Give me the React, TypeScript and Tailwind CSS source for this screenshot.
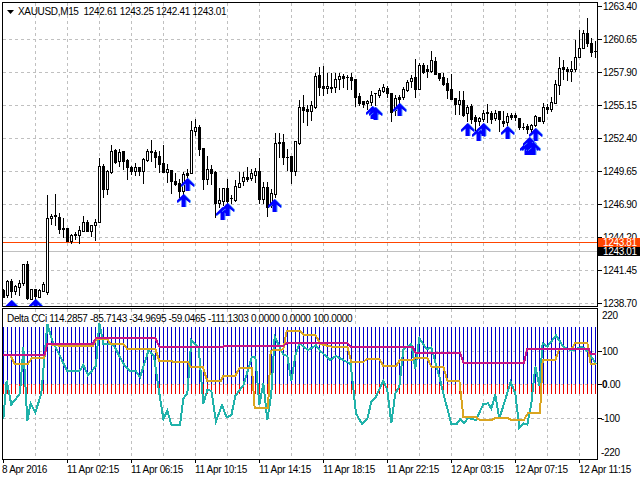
import React from "react";

type C = [string, number, number, number, number];
// type, high, body top, body bottom, low (page pixels); candle k sits at x = 3 + 4k
const candles: C[] = [
  ["b",289,290,297,297],["w",280,281,295,297],["b",279,281,291,297],["w",285,286,291,294],["w",280,283,287,295],
  ["w",264,264,283,285],["b",261,264,298,299],["w",289,289,299,299],["b",289,289,296,299],["w",289,290,297,297],
  ["w",282,284,291,291],["w",195,218,292,294],["w",214,216,218,224],["b",194,215,216,225],["b",213,217,229,233],
  ["b",218,228,229,237],["b",228,228,241,241],["w",234,235,241,243],["w",232,234,235,239],["w",226,230,235,243],
  ["w",216,222,231,231],["b",220,222,231,231],["w",225,225,231,236],["w",219,222,225,240],["w",158,166,222,222],
  ["b",164,166,189,197],["w",170,171,189,194],["w",145,151,172,173],["b",149,150,162,163],["w",149,152,161,166],
  ["b",151,151,161,169],["b",159,160,167,179],["b",166,167,171,174],["w",163,167,171,175],["b",167,167,171,175],
  ["w",158,159,171,183],["w",149,151,160,161],["b",140,151,152,161],["b",150,152,157,167],["b",151,156,164,172],
  ["b",145,163,172,172],["w",164,169,172,182],["b",170,170,181,193],["b",173,181,184,185],["b",179,183,191,197],
  ["w",172,174,191,196],["b",169,173,175,177],["w",121,130,173,173],["w",119,127,131,135],["b",125,127,149,155],
  ["b",148,148,179,189],["w",156,169,179,184],["b",165,169,173,184],["b",171,172,203,217],["w",188,200,203,207],
  ["w",188,188,201,205],["b",179,188,201,205],["b",195,198,198,203],["w",180,186,200,201],["w",172,183,187,187],
  ["w",172,177,181,185],["b",167,177,179,181],["w",169,173,178,180],["w",168,171,175,182],["b",158,171,199,203],
  ["w",182,187,199,203],["b",182,187,207,216],["w",189,193,205,207],["w",133,143,194,197],["b",133,142,143,157],
  ["b",134,142,157,164],["b",149,157,157,170],["b",156,156,171,183],["w",141,141,171,175],["w",100,107,143,144],
  ["b",95,107,110,122],["b",105,109,111,125],["w",101,105,111,120],["w",73,76,107,108],["b",67,75,87,95],
  ["b",66,86,88,95],["w",73,86,88,93],["b",73,87,88,92],["w",73,79,87,92],["w",73,76,79,89],
  ["b",74,76,78,87],["b",75,77,77,89],["b",73,77,80,89],["b",79,79,97,106],["b",93,96,103,105],
  ["b",101,101,104,107],["w",100,101,103,109],["w",91,95,102,105],["b",93,93,93,105],["w",88,90,95,97],
  ["w",84,87,91,92],["b",86,88,93,97],["b",93,93,112,121],["w",95,98,110,115],["b",95,97,99,103],
  ["w",87,89,97,99],["w",80,82,90,91],["w",75,78,81,87],["b",59,77,89,97],["w",63,65,89,89],
  ["b",63,65,72,73],["b",65,69,71,77],["w",51,60,71,72],["b",57,61,74,74],["b",73,73,78,80],
  ["b",73,77,84,85],["b",78,83,90,98],["b",74,89,99,99],["b",98,98,104,114],["w",91,100,104,114],
  ["b",91,100,115,116],["w",105,107,113,121],["b",104,106,119,123],["b",115,117,121,130],["w",117,118,121,125],
  ["w",110,113,119,121],["b",104,112,113,122],["b",111,113,119,123],["w",110,113,118,120],["b",111,111,119,131],
  ["b",111,121,123,126],["w",113,116,122,125],["b",113,115,117,119],["b",113,115,117,120],["b",118,118,127,129],
  ["b",123,127,127,129],["b",124,126,129,133],["w",124,125,129,132],["w",115,116,125,126],["b",117,117,121,121],
  ["w",103,107,121,123],["b",104,107,109,113],["w",97,102,109,111],["w",80,84,103,103],["w",57,68,85,94],
  ["b",60,67,69,79],["b",67,69,71,80],["w",61,69,71,81],["w",40,57,69,71],["w",30,48,57,57],
  ["w",30,33,48,48],["b",18,33,43,46],["b",38,43,52,56],["b",41,51,51,57],
];

const arrows: [number, number][] = [
  [11, 300],[35, 299],[183, 194],[187, 178],[222, 207],[227, 203],[274, 199],[372, 106],[375, 107],[399, 103],
  [467, 123],[478, 128],[483, 123],[507, 126],[535, 128],[526, 142],[528, 142],[529, 137],[531, 142],[533, 142],
];

const toPts = (off: number, a: number[]) => {
  const out: string[] = [];
  for (let i = 0; i < a.length; i += 2) out.push(`${off + a[i] / 3},${230 + a[i + 1] / 3}`);
  return out.join(" ");
};

const teal = toPts(0, [10,566,20,452,34,524,60,490,70,352,82,572,92,520,106,548,124,490,142,282,156,330,176,370,202,424,238,424,250,405,264,436,288,408,298,278,310,342,340,344,372,404,390,424,408,424,420,442,446,360,462,378,478,490,490,566,502,542,514,584,540,584,550,506,562,490,574,332,596,354,610,522,622,480,634,482,648,574,666,526,680,562,694,556,706,498,730,466,756,380,766,380,778,526,790,460,802,570,814,490,824,320,850,374,862,378,874,454,886,376,898,340,924,360,948,346,960,362])
  + " " + toPts(320, [0,362,30,390,48,378,92,402,108,550,126,582,142,566,154,516,166,504,190,452,202,480,214,580,226,490,238,470,250,358,274,342,286,416,298,324,320,358,334,352,358,440,370,490,394,582,410,582,420,568,432,580,444,564,468,570,490,522,504,520,514,536,526,494,538,566,572,456,586,490,598,594,610,580,622,584,634,520,646,410,658,468,668,340,682,350,708,316,730,350,754,362,786,350,806,366,828,403]);

const gold = toPts(0, [30,374,44,402,84,402,96,383,132,383,142,342,186,348,278,348,288,328,322,328,332,342,370,342,382,357,466,357,478,393,514,393,524,397,564,397,572,410,608,410,622,453,662,453,670,437,706,437,718,415,756,415,764,534,804,534,812,362,850,358,860,303,900,303,910,314,946,314,960,340])
  + " " + toPts(320, [0,342,34,350,82,350,94,396,130,396,142,386,178,386,190,408,228,408,240,390,276,390,286,384,322,384,334,410,370,410,382,452,418,452,430,560,466,560,478,569,516,569,528,563,562,563,572,569,612,569,624,549,660,549,668,390,706,390,718,356,756,356,766,338,802,338,812,403,828,403]);

const magenta = toPts(0, [8,374,134,374,142,342,278,342,288,324,466,324,478,350,670,350,672,348,850,348,862,338,960,338])
  + " " + toPts(320, [0,338,82,338,92,350,278,350,286,368,420,368,430,398,612,398,622,356,806,356,812,372,828,372]);

const vGrid = [35, 67, 99, 131, 163, 195, 227, 259, 291, 323, 355, 387, 419, 451, 483, 515, 547, 579];
const arrowPath = "M0 0 L6.5 6.5 L6.5 9 L2 5.5 L2 13 L-2 13 L-2 5.5 L-6.5 9 L-6.5 6.5 Z";

function VLines({ y1, y2 }: { y1: number; y2: number }) {
  return (
    <>
      {vGrid.map((x) => (
        <line key={x} x1={x + 0.5} x2={x + 0.5} y1={y1} y2={y2} stroke="#c0c0c0" strokeDasharray="3 3" />
      ))}
    </>
  );
}
function HLines({ ys }: { ys: number[] }) {
  return (
    <>
      {ys.map((y) => (
        <line key={y} x1={3} x2={597} y1={y + 0.5} y2={y + 0.5} stroke="#c0c0c0" strokeDasharray="3 3" />
      ))}
    </>
  );
}

function AxisRow({ label, tick = true, mt = "", ml = "ml-[1px]" }: { label: React.ReactNode; tick?: boolean; mt?: string; ml?: string }) {
  return (
    <div className={`flex items-center h-[33px] shrink-0 ${mt}`}>
      <div className={`w-[4px] h-px ${tick ? "bg-black" : ""}`} />
      <span className={`${ml} w-[36px] leading-none whitespace-nowrap`}>{label}</span>
    </div>
  );
}

const mainAxis = ["1263.40", "1260.65", "1257.90", "1255.15", "1252.40", "1249.65", "1246.90", "1244.20", "1241.45", "1238.70"];
const times = ["8 Apr 2016", "11 Apr 02:15", "11 Apr 06:15", "11 Apr 10:15", "11 Apr 14:15", "11 Apr 18:15", "11 Apr 22:15", "12 Apr 03:15", "12 Apr 07:15", "12 Apr 11:15"];

export default function App() {
  return (
    <div className="w-[640px] h-[480px] overflow-hidden bg-white pt-[2px] pl-[2px] flex flex-col font-['Liberation_Sans',sans-serif] text-[10px] tracking-[-0.33px] text-black">
      {/* price pane */}
      <div className="flex h-[305px] shrink-0">
        <div className="relative w-[596px] h-[305px] shrink-0 border border-black">
          <svg width="594" height="303" viewBox="3 3 594 303" shapeRendering="crispEdges" className="block">
            <VLines y1={3} y2={306} />
            <HLines ys={[39, 72, 105, 138, 171, 204, 237, 270, 303]} />
            <line x1={3} x2={597} y1={242.5} y2={242.5} stroke="#ff4500" />
            <line x1={3} x2={597} y1={251.5} y2={251.5} stroke="#c0c0c0" />
            {candles.map((c, k) => {
              const x = 3 + 4 * k;
              const [t, hi, top, bot, lo] = c;
              return (
                <g key={k}>
                  <rect x={x} y={hi} width={1} height={lo - hi + 1} fill="#000" />
                  <rect x={x - 1} y={top} width={3} height={bot - top + 1} fill="#000" />
                  {t === "w" && bot - top >= 2 && <rect x={x} y={top + 1} width={1} height={bot - top - 1} fill="#fff" />}
                </g>
              );
            })}
            <g shapeRendering="auto">
              {arrows.map(([x, y], i) => (
                <g key={i} transform={`translate(${x + 0.5} ${y})`}>
                  <path d={arrowPath} fill="#5b9dff" transform="translate(1 0)" />
                  <path d={arrowPath} fill="#0000ff" />
                </g>
              ))}
            </g>
          </svg>
          <div className="absolute left-[4px] top-[4px] flex items-center whitespace-pre leading-none">
            <svg width="7" height="4" viewBox="0 0 7 4" className="mr-[4px]">
              <path d="M0 0H7L3.5 4Z" fill="#000" />
            </svg>
            <span>XAUUSD,M15  1242.61 1243.25 1242.41 1243.01</span>
          </div>
        </div>
        <div className="relative w-[42px] h-[305px] flex flex-col">
          <div className="flex flex-col -mt-[12px]">
            {mainAxis.map((l) => (
              <AxisRow key={l} label={l} />
            ))}
          </div>
          <div className="absolute left-0 top-[236px] w-[42px] h-[9px] bg-[#ff4500] text-white leading-[9px] pl-[5px]">1243.81</div>
          <div className="absolute left-0 top-[245px] w-[42px] h-[9px] bg-black text-white leading-[9px] pl-[5px]">1243.01</div>
        </div>
      </div>
      {/* indicator pane */}
      <div className="flex h-[152px] shrink-0 mt-[1px]">
        <div className="relative w-[596px] h-[152px] shrink-0 border border-black">
          <svg width="594" height="150" viewBox="3 309 594 150" shapeRendering="crispEdges" className="block">
            <VLines y1={309} y2={459} />
            <HLines ys={[351, 384, 418]} />
            {candles.map((_, k) => (
              <g key={k}>
                <rect x={3 + 4 * k} y={327} width={1} height={57} fill="#0000cd" />
                <rect x={3 + 4 * k} y={384} width={1} height={10} fill="#e80000" />
              </g>
            ))}
            <polyline points={teal} fill="none" stroke="#20b2aa" strokeWidth={2} />
            <polyline points={gold} fill="none" stroke="#daa520" strokeWidth={2} />
            <polyline points={magenta} fill="none" stroke="#c71585" strokeWidth={2} />
          </svg>
          <div className="absolute left-[4px] top-[5px] whitespace-pre leading-none">
            Delta CCi 114.2857 -85.7143 -34.9695 -59.0465 -111.1303 0.0000 0.0000 100.0000
          </div>
        </div>
        <div className="flex flex-col w-[42px] -mt-[9px]">
          <AxisRow label="220" tick={false} ml="ml-0" />
          <AxisRow label="100" mt="mt-[3px]" ml="ml-0" />
          <AxisRow label={<><b>0</b>.00</>} ml="ml-0" />
          <AxisRow label="-100" mt="mt-[1px]" ml="-ml-[1px]" />
          <AxisRow label="-220" tick={false} mt="mt-[1px]" ml="-ml-[1px]" />
        </div>
      </div>
      {/* time axis */}
      <div className="flex pl-[1px]">
        {times.map((t, i) => (
          <div key={t} className="w-[64px] shrink-0 flex flex-col">
            <div className="w-px h-[3px] bg-black" />
            <span className={`mt-[2px] leading-none whitespace-nowrap ${i === 0 ? "-ml-[1px]" : ""}`}>{t}</span>
          </div>
        ))}
      </div>
    </div>
  );
}
